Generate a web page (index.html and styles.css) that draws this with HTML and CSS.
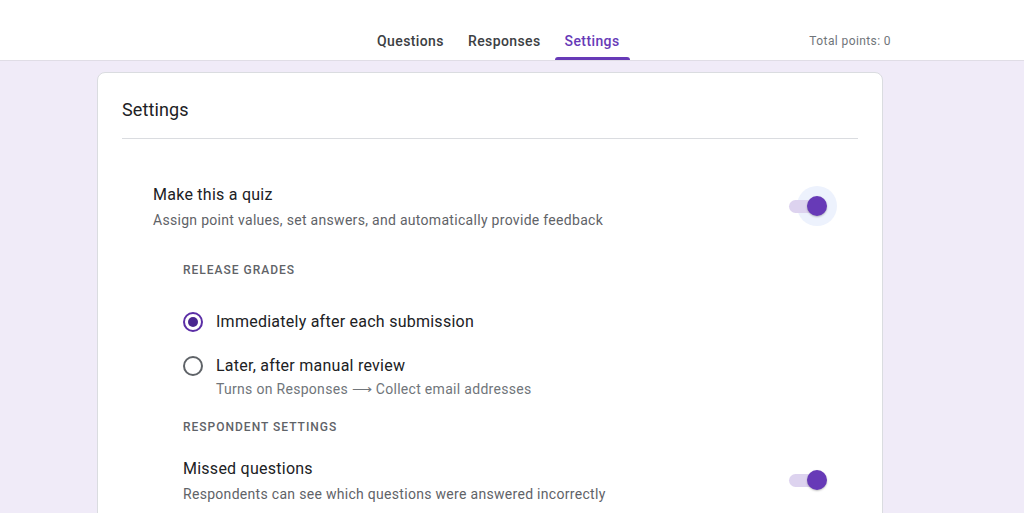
FILE: index.html
```html
<!DOCTYPE html>
<html lang="en">
<head>
  <meta charset="UTF-8">
  <title>Settings</title>
  <link rel="stylesheet" href="styles.css">
</head>
<body>
  <header class="topbar">
    <nav class="tabs">
      <a class="tab">Questions</a>
      <a class="tab">Responses</a>
      <a class="tab active">Settings</a>
    </nav>
    <div class="points">Total points: 0</div>
  </header>

  <main class="card">
    <h1 class="card-title">Settings</h1>

    <div class="row quiz">
      <div class="row-text">
        <div class="row-title">Make this a quiz</div>
        <div class="row-sub">Assign point values, set answers, and automatically provide feedback</div>
      </div>
      <div class="toggle focused"><span class="track"></span><span class="thumb"></span></div>
    </div>

    <div class="section">
      <div class="section-label">Release grades</div>
      <label class="radio-row">
        <span class="radio checked"></span>
        <span class="radio-text">
          <span class="radio-title">Immediately after each submission</span>
        </span>
      </label>
      <label class="radio-row">
        <span class="radio"></span>
        <span class="radio-text">
          <span class="radio-title">Later, after manual review</span>
          <span class="radio-sub">Turns on Responses ⟶ Collect email addresses</span>
        </span>
      </label>

      <div class="section-label">Respondent settings</div>
      <div class="row">
        <div class="row-text">
          <div class="row-title">Missed questions</div>
          <div class="row-sub">Respondents can see which questions were answered incorrectly</div>
        </div>
        <div class="toggle"><span class="track"></span><span class="thumb"></span></div>
      </div>
    </div>
  </main>
</body>
</html>
```

FILE: styles.css
```css
body {
  margin: 0;
  background: #f0ebf8;
  font-family: Roboto, Arial, sans-serif;
  color: #202124;
}
.topbar {
  display: flex;
  height: 60px;
  padding-left: 367px;
  padding-right: 133px;
  background: #fff;
  border-bottom: 1px solid #e0dde6;
}
.tabs { display: flex; gap: 4px; }
.tab {
  position: relative;
  display: flex;
  align-items: center;
  padding: 22px 10px 0;
  font-size: 14px;
  font-weight: 500;
  letter-spacing: 0.4px;
  color: #3c4043;
  cursor: pointer;
}
.tab.active { color: #673ab7; }
.tab.active::after {
  content: "";
  position: absolute;
  left: 0;
  right: 0;
  bottom: 0;
  height: 3px;
  border-radius: 3px 3px 0 0;
  background: #673ab7;
}
.points {
  margin-left: auto;
  padding-top: 22px;
  display: flex;
  align-items: center;
  font-size: 12px;
  letter-spacing: 0.4px;
  color: #70757a;
}
.card {
  width: 736px;
  margin: 11px 0 0 97px;
  padding: 0 24px 40px;
  background: #fff;
  border: 1px solid #dadce0;
  border-radius: 8px;
}
.card-title {
  margin: 0;
  padding: 25px 0 16px;
  font-size: 18px;
  line-height: 24px;
  font-weight: 400;
  letter-spacing: 0.1px;
  border-bottom: 1px solid #dadce0;
}
.row {
  display: flex;
  align-items: center;
  justify-content: space-between;
  padding-right: 31px;
}
.quiz { margin-top: 44px; padding-left: 31px; }
.row-title { font-size: 16px; line-height: 24px; letter-spacing: 0.25px; margin-bottom: 3px; }
.row-sub { font-size: 14px; line-height: 20px; letter-spacing: 0.3px; color: #5f6368; }
.toggle {
  position: relative;
  width: 38px;
  height: 20px;
  margin-bottom: 2px;
}
.track {
  position: absolute;
  left: 0;
  right: 1px;
  top: 4px;
  height: 13px;
  border-radius: 7px;
  background: #ddd3ef;
}
.thumb {
  position: absolute;
  right: 0;
  top: 0;
  width: 20px;
  height: 20px;
  border-radius: 50%;
  background: #673ab7;
  box-shadow: 0 1px 2px rgba(0,0,0,0.25);
}
.toggle.focused::before {
  content: "";
  position: absolute;
  right: -10px;
  top: -10px;
  width: 40px;
  height: 40px;
  border-radius: 50%;
  background: #edf2fd;
}
.section { padding-left: 61px; }
.section-label {
  margin-top: 32px;
  font-size: 12px;
  line-height: 16px;
  font-weight: 500;
  letter-spacing: 1px;
  text-transform: uppercase;
  color: #5f6368;
}
.radio-row {
  display: flex;
  gap: 13px;
  margin-top: 32px;
}
.radio-row + .radio-row { margin-top: 20px; }
.radio-row + .section-label { margin-top: 20px; }
.section-label + .row { margin-top: 22px; }
.radio {
  box-sizing: border-box;
  flex: none;
  width: 20px;
  height: 20px;
  margin-top: 2px;
  border: 2px solid #5f6368;
  border-radius: 50%;
  display: flex;
  align-items: center;
  justify-content: center;
}
.radio.checked { border-color: #5b2ea6; }
.radio.checked::after {
  content: "";
  width: 10px;
  height: 10px;
  border-radius: 50%;
  background: #4a2690;
}
.radio-text { display: flex; flex-direction: column; }
.radio-title { font-size: 16px; line-height: 24px; letter-spacing: 0.25px; }
.radio-sub { margin-top: 1px; font-size: 14px; line-height: 20px; letter-spacing: 0.3px; color: #70757a; }
```
